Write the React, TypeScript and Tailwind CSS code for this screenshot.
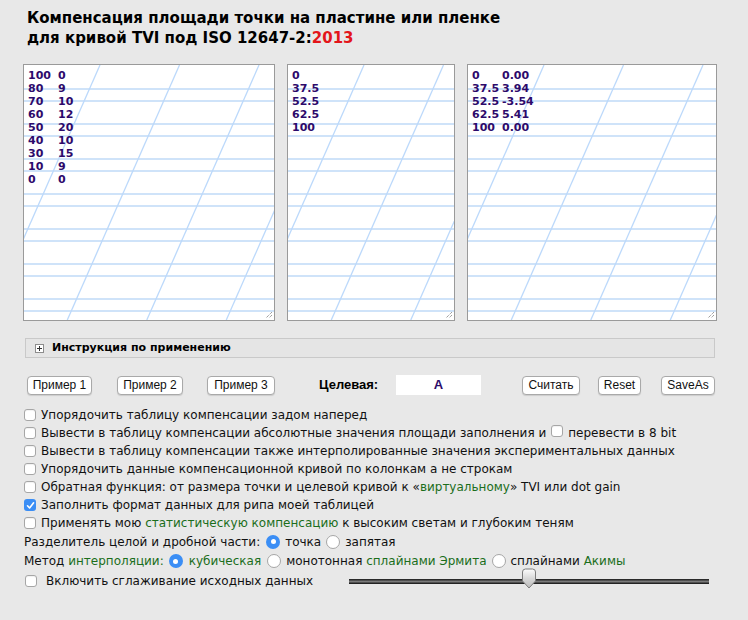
import React from "react";

const HLINES = [24, 36, 59, 71, 94, 106, 129, 141, 164, 176, 199, 211, 234, 246];

function Lines({ w, h }: { w: number; h: number }) {
  const slants: number[] = [];
  for (let k = -1; k < 8; k++) slants.push(76 + 79.5 * k);
  return (
    <svg className="absolute inset-0" width={w} height={h}>
      {HLINES.map((y) => (
        <rect key={y} x={0} y={y - 1} width={w} height={2} fill="#cfe3f9" />
      ))}
      {slants.map((x) => (
        <line key={x} x1={x} y1={0} x2={x - 0.44 * h} y2={h} stroke="#bcd9fb" strokeWidth={1.3} />
      ))}
    </svg>
  );
}

function Grip() {
  return (
    <svg className="absolute right-[1px] bottom-[1px]" width="9" height="9">
      <line x1="8" y1="2" x2="2" y2="8" stroke="#777" strokeWidth="1" strokeDasharray="1 1" />
      <line x1="8" y1="5" x2="5" y2="8" stroke="#777" strokeWidth="1" strokeDasharray="1 1" />
    </svg>
  );
}

function Area({ w, rows, col }: { w: number; rows: [string, string?][]; col: boolean }) {
  return (
    <div
      className="relative h-[257px] border border-[#9a9a9a] bg-white overflow-hidden"
      style={{ width: w }}
    >
      <Lines w={w - 2} h={255} />
      <Grip />
      <div className="relative pl-[4px] pt-[4px] font-['DejaVu_Sans',sans-serif] text-[11px] leading-[13px] font-bold text-[#2d0a6b]">
        {rows.map((r, i) => (
          <div key={i} className="flex">
            <span className={col ? "w-[30px]" : ""}>{r[0]}</span>
            {r[1] !== undefined && <span>{r[1]}</span>}
          </div>
        ))}
      </div>
    </div>
  );
}

function Btn({ w, children, ml }: { w: string; children: React.ReactNode; ml: string }) {
  return (
    <div
      className={`${w} ${ml} h-[19px] flex items-center justify-center bg-white border border-[#a9a9a9] rounded-[4px] shadow-[0_1px_1px_rgba(0,0,0,0.12)] text-[12px] text-[#111] font-['Liberation_Sans',sans-serif]`}
    >
      {children}
    </div>
  );
}

function Check({ checked = false }: { checked?: boolean }) {
  if (checked)
    return (
      <span className="inline-flex w-[12px] h-[12px] rounded-[3px] bg-[#3b8ef5] items-center justify-center shrink-0">
        <svg width="9" height="9" viewBox="0 0 9 9">
          <path d="M1.5 4.8 L3.6 7 L7.6 1.8" stroke="white" strokeWidth="1.6" fill="none" strokeLinecap="round" strokeLinejoin="round" />
        </svg>
      </span>
    );
  return (
    <span className="inline-block w-[12px] h-[12px] rounded-[3px] bg-white border border-[#a6a6a6] shadow-[inset_0_1px_1px_rgba(0,0,0,0.06)] shrink-0" />
  );
}

function Radio({ checked = false }: { checked?: boolean }) {
  if (checked)
    return (
      <span className="inline-flex w-[14px] h-[14px] rounded-full bg-[#3b8ef5] items-center justify-center shrink-0">
        <span className="w-[5px] h-[5px] rounded-full bg-white" />
      </span>
    );
  return <span className="inline-block w-[14px] h-[14px] rounded-full bg-white border border-[#a6a6a6] shrink-0" />;
}

const G = ({ children }: { children: React.ReactNode }) => <span className="text-[#1b6e1b]">{children}</span>;

function Row({ children, checked = false }: { children: React.ReactNode; checked?: boolean }) {
  return (
    <div className="h-[18px] flex items-center pl-[24px]">
      <Check checked={checked} />
      <span className="ml-[5px] whitespace-nowrap">{children}</span>
    </div>
  );
}

export default function App() {
  return (
    <div className="w-[748px] min-h-[620px] bg-[#e8e8e8] text-black font-['DejaVu_Sans',sans-serif]">
      <div className="pt-[8px] pl-[27px] text-[15px] leading-[20px] font-bold text-black">
        Компенсация площади точки на пластине или пленке
        <br />
        для кривой TVI под ISO 12647-2:<span className="text-[#e3151a]">2013</span>
      </div>

      <div className="mt-[16px] pl-[23px] flex gap-[12px]">
        <Area
          w={252}
          col
          rows={[
            ["100", "0"],
            ["80", "9"],
            ["70", "10"],
            ["60", "12"],
            ["50", "20"],
            ["40", "10"],
            ["30", "15"],
            ["10", "9"],
            ["0", "0"],
          ]}
        />
        <Area w={168} col={false} rows={[["0"], ["37.5"], ["52.5"], ["62.5"], ["100"]]} />
        <Area
          w={250}
          col
          rows={[
            ["0", "0.00"],
            ["37.5", "3.94"],
            ["52.5", "-3.54"],
            ["62.5", "5.41"],
            ["100", "0.00"],
          ]}
        />
      </div>

      <div className="mt-[17px] ml-[25px] w-[690px] h-[20px] border border-[#c9c9c9] bg-[#e5e5e5] flex items-center">
        <span className="ml-[9px] w-[9px] h-[9px] border border-[#8c8c8c] bg-white flex items-center justify-center">
          <svg width="7" height="7" viewBox="0 0 7 7">
            <path d="M1 3.5 H6 M3.5 1 V6" stroke="#333" strokeWidth="1" />
          </svg>
        </span>
        <span className="ml-[8px] text-[11px] font-bold">Инструкция по применению</span>
      </div>

      <div className="mt-[17px] pl-[27px] flex items-center h-[20px]">
        <Btn w="w-[65px]" ml="">Пример 1</Btn>
        <Btn w="w-[66px]" ml="ml-[25px]">Пример 2</Btn>
        <Btn w="w-[68px]" ml="ml-[24px]">Пример 3</Btn>
        <span className="ml-[44px] w-[63px] text-[13px] font-bold font-['Liberation_Sans',sans-serif]">Целевая:</span>
        <div className="ml-[14px] w-[85px] h-[20px] bg-white flex items-center justify-center text-[13px] font-bold text-[#2d0a6b] font-['Liberation_Sans',sans-serif]">
          A
        </div>
        <Btn w="w-[58px]" ml="ml-[41px]">Считать</Btn>
        <Btn w="w-[43px]" ml="ml-[18px]">Reset</Btn>
        <Btn w="w-[54px]" ml="ml-[20px]">SaveAs</Btn>
      </div>

      <div className="mt-[11px] text-[12px] text-[#111]">
        <Row>Упорядочить таблицу компенсации задом наперед</Row>
        <div className="h-[18px] flex items-center pl-[24px] whitespace-nowrap">
          <Check />
          <span className="ml-[5px]">Вывести в таблицу компенсации абсолютные значения площади заполнения и</span>
          <span className="ml-[5px]"><Check /></span>
          <span className="ml-[5px]">перевести в 8 bit</span>
        </div>
        <Row>Вывести в таблицу компенсации также интерполированные значения экспериментальных данных</Row>
        <Row>Упорядочить данные компенсационной кривой по колонкам а не строкам</Row>
        <Row>
          Обратная функция: от размера точки и целевой кривой к «<G>виртуальному</G>» TVI или dot gain
        </Row>
        <Row checked>Заполнить формат данных для рипа моей таблицей</Row>
        <Row>
          Применять мою <G>статистическую компенсацию</G> к высоким светам и глубоким теням
        </Row>
        <div className="h-[19px] flex items-center pl-[24px] whitespace-nowrap">
          <span>Разделитель целой и дробной части:</span>
          <span className="ml-[6px] flex"><Radio checked /></span>
          <span className="ml-[5px]">точка</span>
          <span className="ml-[5px] flex"><Radio /></span>
          <span className="ml-[5px]">запятая</span>
        </div>
        <div className="h-[20px] flex items-center pl-[24px] whitespace-nowrap">
          <span>
            Метод <G>интерполяции:</G>
          </span>
          <span className="ml-[5px] flex"><Radio checked /></span>
          <span className="ml-[6px]"><G>кубическая</G></span>
          <span className="ml-[6px] flex"><Radio /></span>
          <span className="ml-[5px]">
            монотонная <G>сплайнами Эрмита</G>
          </span>
          <span className="ml-[5px] flex"><Radio /></span>
          <span className="ml-[5px]">
            сплайнами <G>Акимы</G>
          </span>
        </div>
        <div className="h-[20px] flex items-center pl-[25px] whitespace-nowrap">
          <Check />
          <span className="ml-[9px]">Включить сглаживание исходных данных</span>
          <div className="ml-auto mr-[39px] w-[360px] relative h-[20px] flex items-center">
            <div className="w-full h-[5px] bg-[#4a4a4a] border-t border-[#2a2a2a] border-b border-b-[#222] bg-[linear-gradient(#3a3a3a,#7a7a7a_50%,#3a3a3a)]" />
            <svg className="absolute left-[172px] top-[-3px]" width="16" height="21" viewBox="0 0 16 21">
              <defs>
                <linearGradient id="tg" x1="0" y1="0" x2="0" y2="1">
                  <stop offset="0" stopColor="#fdfdfd" />
                  <stop offset="0.5" stopColor="#d8d8d8" />
                  <stop offset="1" stopColor="#bcbcbc" />
                </linearGradient>
              </defs>
              <path d="M1.5 4 Q1.5 1 4.5 1 H11.5 Q14.5 1 14.5 4 V13 L8 20 L1.5 13 Z" fill="url(#tg)" stroke="#7d7d7d" strokeWidth="1" />
            </svg>
          </div>
        </div>
      </div>
    </div>
  );
}
